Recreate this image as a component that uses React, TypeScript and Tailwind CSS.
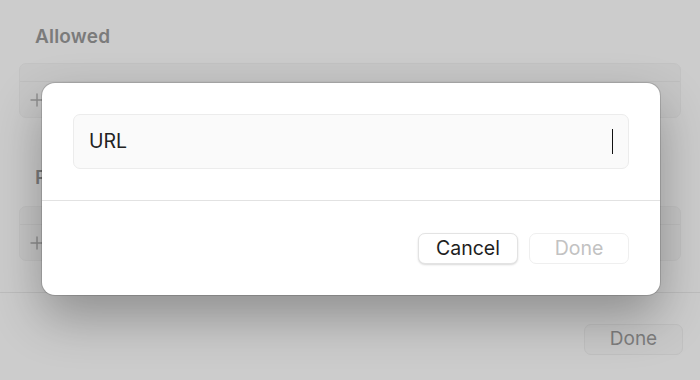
import React from 'react';

const font = { fontFamily: 'Inter, "Noto Sans", sans-serif' };

const PlusIcon: React.FC = () => (
  <svg width="14" height="14" viewBox="0 0 14 14" className="text-[#8e8e8e]">
    <path d="M7 1v12M1 7h12" stroke="currentColor" strokeWidth="1.4" strokeLinecap="round" />
  </svg>
);

const ListBox: React.FC = () => (
  <div className="mx-[19px] h-[55px] rounded-[7px] bg-[#c7c7c7] border border-[#c3c3c3] flex flex-col">
    <div className="h-[18px] border-b border-[#bfbfbf]" />
    <div className="flex-1 flex items-center pl-[10px]">
      <PlusIcon />
    </div>
  </div>
);

const App: React.FC = () => {
  return (
    <div className="relative w-[700px] h-[380px] overflow-hidden bg-[#cccccc]" style={font}>
      {/* dimmed sheet behind */}
      <div className="flex flex-col">
        <div className="pt-[23px] pl-[35px] h-[63px] text-[19px] font-semibold tracking-[0.2px] text-[#7b7b7b]">Allowed</div>
        <ListBox />
        <div className="pt-[46px] pl-[35px] h-[88px] text-[19px] font-semibold text-[#7b7b7b]">Prohibited</div>
        <ListBox />
        <div className="mt-[31px] border-t border-[#bdbdbd]" />
        <div className="flex justify-end pr-[17px] pt-[31px]">
          <button className="w-[99px] h-[31px] rounded-[7px] bg-[#c9c9c9] border border-[#c1c1c1] text-[19px] text-[#7e7e7e]">
            Done
          </button>
        </div>
      </div>

      {/* modal */}
      <div className="absolute left-[42px] top-[83px] w-[618px] h-[212px] rounded-[13px] bg-white shadow-[0_22px_50px_rgba(0,0,0,0.3),0_0_0_1px_rgba(0,0,0,0.14)] flex flex-col">
        <div className="h-[118px] border-b border-[#e2e2e2] px-[31px] pt-[31px]">
          <div className="h-[55px] rounded-[7px] bg-[#fafafa] border border-[#ececec] flex items-center justify-between pl-[15px] pr-[15px]">
            <span className="text-[19.5px] text-[#222222]">URL</span>
            <span className="w-[1.5px] h-[25px] bg-[#111111]" />
          </div>
        </div>
        <div className="flex-1 flex justify-end items-start gap-[11px] pr-[31px] pt-[32px]">
          <button className="w-[100px] h-[31px] rounded-[7px] bg-white border border-[#e3e3e3] shadow-[0_1px_2px_rgba(0,0,0,0.15)] text-[19.5px] text-[#1e1e1e]">
            Cancel
          </button>
          <button className="w-[100px] h-[31px] rounded-[7px] bg-white border border-[#efefef] text-[19.5px] text-[#c2c2c2]">
            Done
          </button>
        </div>
      </div>
    </div>
  );
};

export default App;
